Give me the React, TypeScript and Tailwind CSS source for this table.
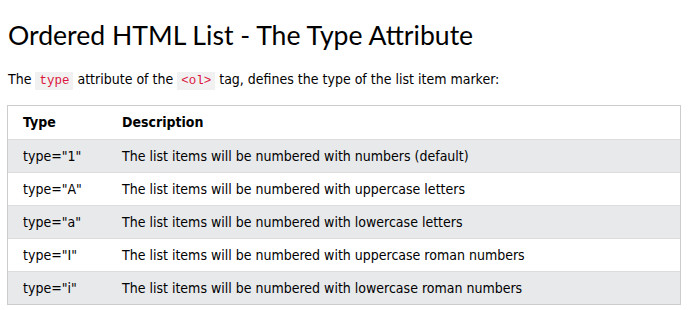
export default function App() {
  const rows = [
    ['type="1"', 'The list items will be numbered with numbers (default)'],
    ['type="A"', 'The list items will be numbered with uppercase letters'],
    ['type="a"', 'The list items will be numbered with lowercase letters'],
    ['type="I"', 'The list items will be numbered with uppercase roman numbers'],
    ['type="i"', 'The list items will be numbered with lowercase roman numbers'],
  ];
  const body = { fontFamily: '"DejaVu Sans Condensed", "DejaVu Sans", sans-serif' };
  const mono = { fontFamily: '"Liberation Mono", monospace' };
  return (
    <div className="w-[690px] h-[310px] bg-white text-black overflow-hidden" style={body}>
      <h2 className="pl-[8px] pt-[18px] text-[26.6px] leading-[34px] font-normal" style={{ fontFamily: 'Lato, sans-serif' }}>
        Ordered HTML List - The Type Attribute
      </h2>
      <p className="pl-[8px] mt-[17px] text-[14px] leading-[20px]">
        The{' '}
        <code className="text-[#dc143c] bg-[#f1f1f1] px-[4px] py-[2px] text-[12.5px]" style={mono}>type</code>{' '}
        attribute of the{' '}
        <code className="text-[#dc143c] bg-[#f1f1f1] px-[4px] py-[2px] text-[12.5px]" style={mono}>&lt;ol&gt;</code>{' '}
        tag, defines the type of the list item marker:
      </p>
      <div className="ml-[7px] mt-[14px] w-[674px] border border-[#cccccc] text-[14px]">
        <div className="flex h-[33px] items-center font-bold bg-white">
          <div className="w-[114px] pl-[15px]">Type</div>
          <div>Description</div>
        </div>
        {rows.map((r, i) => (
          <div key={i} className={`flex h-[33px] items-center border-t border-[#dddddd] ${i % 2 === 0 ? 'bg-[#e7e9eb]' : 'bg-white'}`}>
            <div className="w-[114px] pl-[15px]">{r[0]}</div>
            <div>{r[1]}</div>
          </div>
        ))}
      </div>
    </div>
  );
}
